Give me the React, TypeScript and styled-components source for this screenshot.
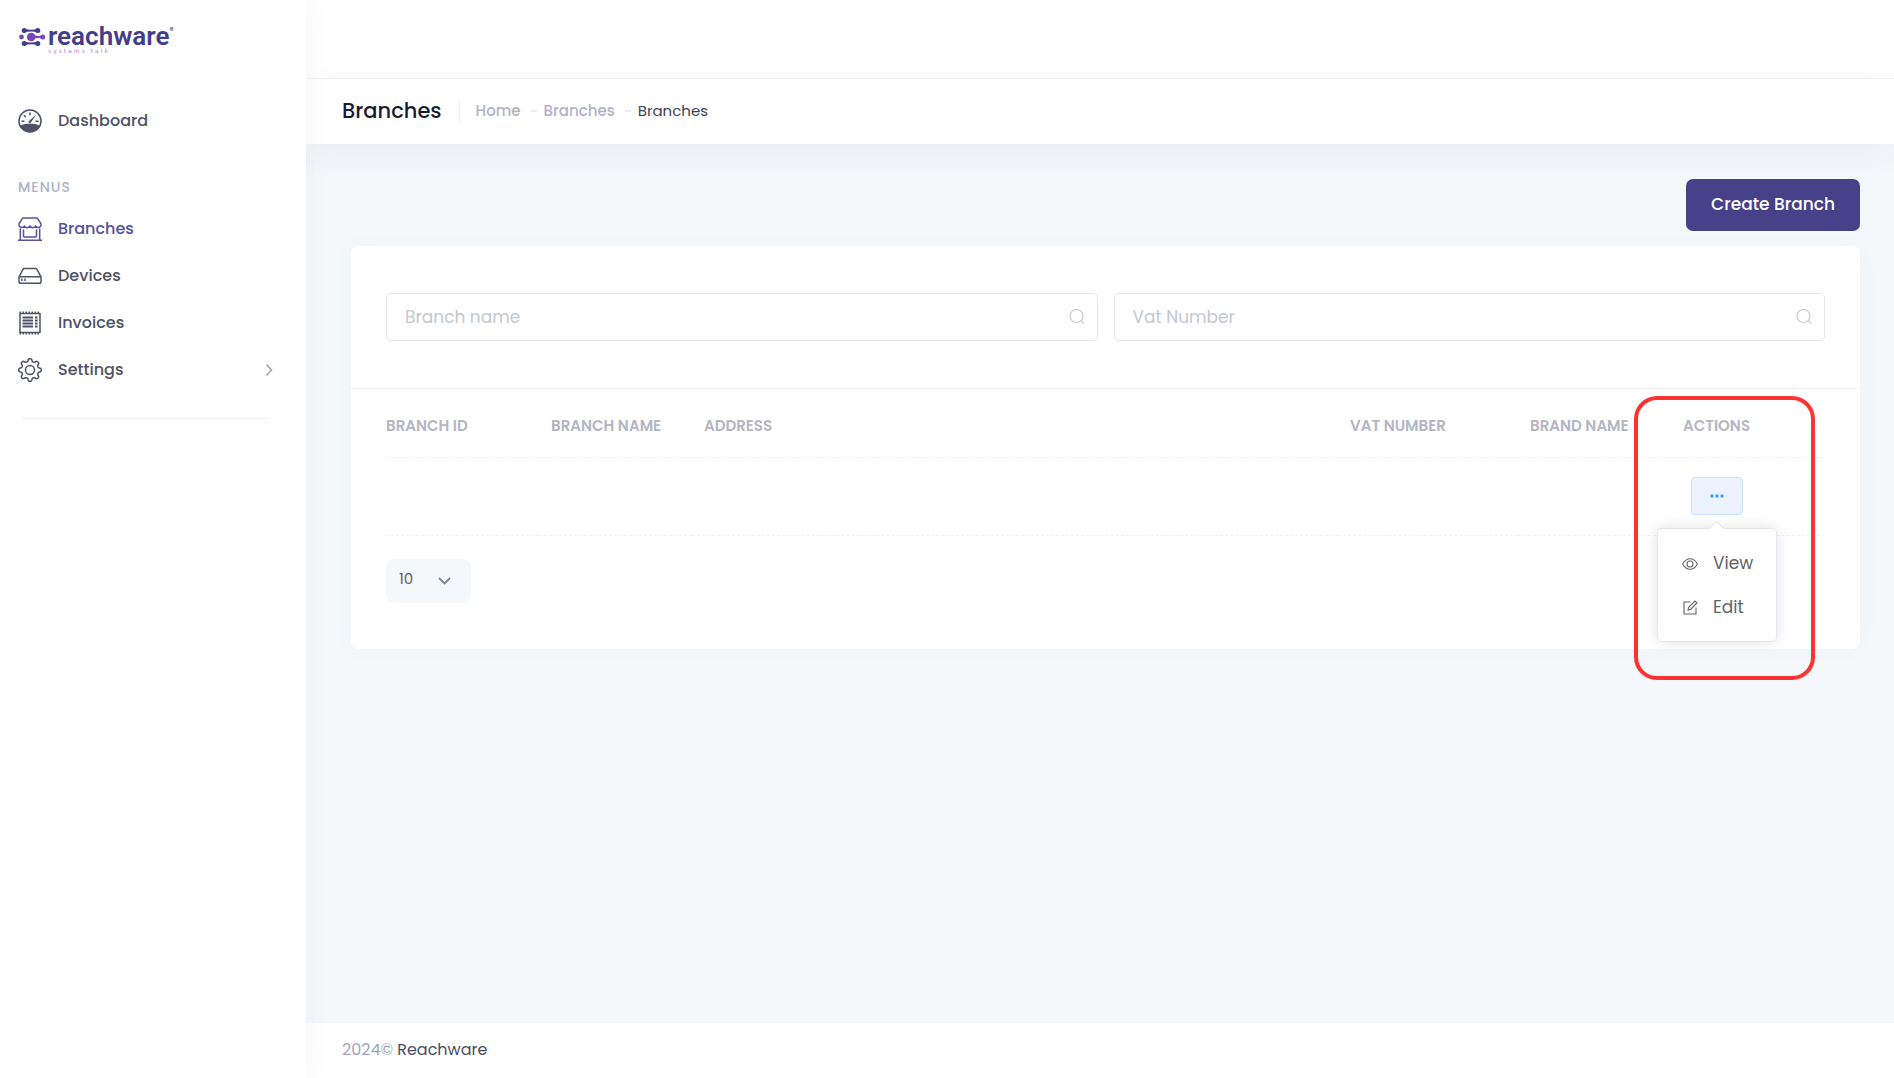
import React, { useState } from 'react';
import styled, { createGlobalStyle, css } from 'styled-components';

const font = "Poppins, Inter, 'Open Sans', sans-serif";

const Global = createGlobalStyle`
  *, *::before, *::after { box-sizing: border-box; }
  body { margin: 0; background: #f4f8fb; font-family: ${font}; font-size: 16px; color: #3f4254; }
  button, input, select { font-family: inherit; }
  a { text-decoration: none; }
`;

const Shell = styled.div`display: flex; min-height: 100vh;`;

const Sidebar = styled.aside`
  flex: 0 0 306px;
  background: #fff;
  box-shadow: 0 0 28px rgba(82, 63, 105, 0.06);
  position: relative;
  z-index: 1;
`;

const Logo = styled.a`
  display: flex;
  align-items: flex-start;
  height: 78px;
  padding: 24px 18px 0;
  color: #433d8b;
`;

const LogoMark = styled.svg`width: 28px; height: 26px; flex: none;`;

const LogoWords = styled.span`display: flex; flex-direction: column; padding-left: 2px;`;

const LogoName = styled.span`
  display: flex;
  font: 600 26px/24px Roboto, sans-serif;
`;

const LogoSign = styled.span`font: 700 6px/12px Inter, sans-serif;`;

const LogoTag = styled.span`
  font: 500 6px/6px 'DejaVu Sans', sans-serif;
  letter-spacing: 2px;
  color: #a98bd0;
`;

const Nav = styled.nav`display: flex; flex-direction: column; padding: 19px 33px 0 18px;`;

const NavLink = styled.a<{ $active?: boolean }>`
  display: flex;
  align-items: center;
  gap: 16px;
  height: 47px;
  font-size: 16px;
  font-weight: 500;
  color: ${(p) => (p.$active ? '#5550a0' : '#4f5266')};
`;

const NavText = styled.span`flex: 1;`;

const NavIcon = styled.svg`
  width: 24px;
  height: 24px;
  fill: none;
  stroke: currentColor;
  stroke-width: 1.5;
`;

const Chevron = styled.svg`
  width: 8px;
  height: 14px;
  fill: none;
  stroke: #a1a5b7;
  stroke-width: 1.6;
`;

const NavHeading = styled.h2`
  margin: 31px 0 6px;
  font-size: 14px;
  line-height: 24px;
  font-weight: 500;
  letter-spacing: 1px;
  color: #b0b3c6;
`;

const NavRule = styled.hr`
  align-self: stretch;
  margin: 25px 4px 0;
  border: 0;
  border-top: 1px solid #eff2f5;
`;

const Page = styled.div`flex: 1; min-width: 0; display: flex; flex-direction: column;`;

const TopBar = styled.header`height: 79px; background: #fff; border-bottom: 1px solid #eff2f5;`;

const TitleBar = styled.div`
  display: flex;
  align-items: center;
  height: 65px;
  padding: 0 36px 2px;
  background: #fff;
  box-shadow: 0 10px 30px rgba(82, 63, 105, 0.05);
`;

const Title = styled.h1`
  margin: 0;
  padding-right: 17px;
  font-size: 21px;
  line-height: 24px;
  font-weight: 500;
  color: #181c32;
  border-right: 1px solid #eff2f5;
`;

const Crumbs = styled.ol`
  display: flex;
  align-items: center;
  gap: 10px;
  margin: 0;
  padding: 0 0 0 16px;
  list-style: none;
  font-size: 15px;
  line-height: 24px;
`;

const Crumb = styled.li<{ $current?: boolean }>`
  display: flex;
  align-items: center;
  gap: 7px;
  font-weight: ${(p) => (p.$current ? 400 : 500)};
  color: ${(p) => (p.$current ? '#3f4254' : '#b0b3c6')};
  a { color: inherit; }
  &:not(:first-child)::before { content: ''; width: 6px; height: 2px; background: #e9edf2; }
`;

const Main = styled.main`flex: 1; padding: 35px 34px 36px 45px;`;

const Actions = styled.div`display: flex; justify-content: flex-end; margin-bottom: 15px;`;

const CreateButton = styled.button`
  height: 52px;
  padding: 0 25px 2px;
  border: 0;
  border-radius: 7px;
  background: #464189;
  color: #fff;
  font-size: 17px;
  font-weight: 500;
`;

const Card = styled.section`
  position: relative;
  background: #fff;
  border-radius: 8px;
  box-shadow: 0 0 24px rgba(76, 87, 125, 0.03);
`;

const Filters = styled.form`
  display: grid;
  grid-template-columns: 1fr 1fr;
  gap: 16px;
  padding: 47px 35px;
  border-bottom: 1px solid #f1f3f6;
`;

const Field = styled.label`
  display: flex;
  align-items: center;
  height: 48px;
  padding: 0 12px 0 18px;
  border: 1px solid #e4e5ee;
  border-radius: 5px;
  color: #c8cbd3;
`;

const FieldInput = styled.input`
  flex: 1;
  min-width: 0;
  border: 0;
  padding: 0;
  outline: 0;
  background: none;
  font-size: 17px;
  color: #3f4254;
  &::placeholder { color: #c4c8d0; opacity: 1; }
`;

const SearchIcon = styled.svg`width: 16px; height: 16px; fill: none; stroke: currentColor; stroke-width: 1.2;`;

const CardBody = styled.div`padding: 0 35px 46px;`;

const Table = styled.table`width: 100%; border-collapse: collapse; table-layout: fixed;`;

const cell = css`
  padding: 0 0 0 12px;
  text-align: left;
  border-bottom: 1px dashed #eff2f5;
  &:first-child { padding-left: 0; }
`;

const Th = styled.th<{ $width?: number }>`
  ${cell}
  width: ${(p) => (p.$width ? `${p.$width}px` : 'auto')};
  height: 68px;
  padding-top: 6px;
  font-size: 15px;
  font-weight: 600;
  color: #b5b5c3;
  white-space: nowrap;
`;

const Td = styled.td`${cell} height: 78px;`;

const MenuAnchor = styled.div`position: relative; width: 52px; margin-left: 8px;`;

const MoreButton = styled.button`
  display: grid;
  place-items: center;
  width: 52px;
  height: 38px;
  padding: 0;
  border: 1px solid #c6e2ff;
  border-radius: 4px;
  background: #ecf3ff;
  color: #409eff;
`;

const Dots = styled.svg`width: 14px; height: 4px; fill: currentColor;`;

const Menu = styled.div`
  position: absolute;
  top: 51px;
  left: 50%;
  transform: translateX(-50%);
  z-index: 2;
  width: 120px;
  padding: 12px 0;
  background: #fff;
  border: 1px solid #e4e7ed;
  border-radius: 5px;
  box-shadow: 0 0 14px rgba(0, 0, 0, 0.12);
  &::before {
    content: '';
    position: absolute;
    top: -6px;
    left: 53px;
    width: 11px;
    height: 11px;
    background: #fff;
    border: solid #e4e7ed;
    border-width: 1px 0 0 1px;
    transform: rotate(45deg);
  }
`;

const MenuItem = styled.button`
  display: flex;
  align-items: center;
  gap: 15px;
  width: 100%;
  height: 44px;
  padding: 0 0 0 24px;
  border: 0;
  background: none;
  color: #606266;
  font-size: 17px;
`;

const MenuIcon = styled.svg`
  flex: none;
  width: 16px;
  height: 16px;
  fill: none;
  stroke: currentColor;
  stroke-width: 1.1;
`;

const Sizer = styled.label`
  display: inline-flex;
  align-items: center;
  position: relative;
  margin-top: 23px;
  color: #7e8299;
`;

const SizeSelect = styled.select`
  appearance: none;
  width: 85px;
  height: 44px;
  padding: 0 13px 4px;
  border: 0;
  border-radius: 8px;
  background: #f4f8fb;
  font-size: 15px;
  font-weight: 400;
  color: #5e6278;
`;

const SizeArrow = styled.svg`
  position: absolute;
  right: 20px;
  width: 13px;
  height: 8px;
  fill: none;
  stroke: currentColor;
  stroke-width: 1.8;
  pointer-events: none;
`;

const Highlight = styled.div`
  position: absolute;
  top: 150px;
  right: 45px;
  z-index: 3;
  width: 181px;
  height: 284px;
  border: 4px solid #ff3131;
  border-radius: 23px;
  pointer-events: none;
`;

const Footer = styled.footer`
  display: flex;
  align-items: center;
  gap: 4px;
  height: 55px;
  padding: 0 36px 2px;
  background: #fff;
  font-size: 16px;
  color: #a1a5b7;
  a { color: #4b4e60; }
`;

function GaugeIcon() {
  return (
    <NavIcon viewBox="0 0 24 24" aria-hidden="true">
      <circle cx="12" cy="12" r="11" />
      <path d="M2 16.800C5 15 9 14.800 12 14.800s7 .2 10 2C20 21 16 23 12 23s-8-2-10-6.200z" fill="currentColor" stroke="none" />
      <path d="M3.500 12.200h3M17.500 12.200h3M12 3.500v2.800M5.800 6.300l2 2" />
      <path d="M18.500 5.200 10.700 12.200a1.300 1.300 0 0 0 1.800 1.800z" fill="currentColor" stroke="none" />
    </NavIcon>
  );
}

function StoreIcon() {
  return (
    <NavIcon viewBox="0 0 24 24" aria-hidden="true">
      <path d="M5.500 1h13q.8 0 1.200.6L23 6.800c.6 3.400-3.300 5-5.300 2.400-1.200 2-4.400 2-5.700 0-1.300 2-4.500 2-5.700 0C4.300 11.800.4 10.200 1 6.800l3.300-5.200Q4.700 1 5.500 1z" />
      <path d="M2.300 11.500V23M21.700 11.500V23M0 23.200h24M5.500 12.500v6.500q0 1 1 1h11q1 0 1-1v-6.500" />
    </NavIcon>
  );
}

function DriveIcon() {
  return (
    <NavIcon viewBox="0 0 24 24" aria-hidden="true">
      <path d="M1 13 5 5.400c.3-.5.700-.8 1.300-.8h11.400c.6 0 1 .3 1.300.8L23 13v4.500c0 1-.8 1.800-1.800 1.800H2.800c-1 0-1.800-.8-1.800-1.800z" />
      <path d="M1.200 12.700h21.600M4 14.500v2.600M7 14.500v2.600" />
    </NavIcon>
  );
}

function InvoiceIcon() {
  return (
    <NavIcon viewBox="0 0 24 24" aria-hidden="true">
      <path d="M2 2v20M22 2v20M2 2.500h20M2 21.500h20" />
      <path d="M1.500 1.200h21M1.500 22.800h21" strokeDasharray="1.500 1.500" />
      <path d="M4.500 6.500h10.500M4.500 9.500h10.500M4.500 12.500h10.500M4.500 15.500h10.500M17 6.500h2.500M17 9.500h2.500M17 12.500h2.500M17 15.500h2.500" strokeWidth="1.800" />
    </NavIcon>
  );
}

const gearOutline = Array.from({ length: 128 }, (_, i) => {
  const angle = (i / 128) * Math.PI * 2;
  const radius = 9.9 + 1.4 * Math.tanh(2 * Math.cos(8 * angle));
  return `${(12 + radius * Math.sin(angle)).toFixed(2)},${(12 - radius * Math.cos(angle)).toFixed(2)}`;
}).join(' ');

function GearIcon() {
  return (
    <NavIcon viewBox="0 0 24 24" aria-hidden="true">
      <circle cx="12" cy="12" r="4.500" />
      <polygon points={gearOutline} strokeLinejoin="round" />
    </NavIcon>
  );
}

function Search() {
  return (
    <SearchIcon viewBox="0 0 16 16" aria-hidden="true">
      <circle cx="7.500" cy="7" r="6.500" />
      <path d="m12 11.500 3 3" />
    </SearchIcon>
  );
}

const columns = [
  { label: 'BRANCH ID', width: 153 },
  { label: 'BRANCH NAME', width: 153 },
  { label: 'ADDRESS' },
  { label: 'VAT NUMBER', width: 180 },
  { label: 'BRAND NAME', width: 153 },
  { label: 'ACTIONS', width: 154 },
];

export default function App() {
  const [open, setOpen] = useState(true);
  return (
    <>
      <Global />
      <Shell>
        <Sidebar>
          <Logo href="#">
            <LogoMark viewBox="0 4 28 26" aria-hidden="true">
              <g fill="#433d8b">
                <circle cx="6.200" cy="10.500" r="2.500" /><circle cx="19.800" cy="10.500" r="2.500" />
                <circle cx="6.200" cy="23.500" r="2.500" /><circle cx="19.800" cy="23.500" r="2.500" />
                <path d="M6 8.500q3 1.300 7 1.300t7-1.300v4q-3-1-7-1t-7 1zM6 25.500q3-1.300 7-1.300t7 1.300v-4q-3 1-7 1t-7-1z" />
              </g>
              <g fill="#7b46b0">
                <circle cx="3.500" cy="17" r="2.400" /><circle cx="13.200" cy="17" r="4.300" /><circle cx="24.700" cy="17" r="2.500" />
                <path d="M15 14.500q4 2.300 9.700 1v3q-5.700-1.300-9.700 1z" />
              </g>
            </LogoMark>
            <LogoWords>
              <LogoName>reachware<LogoSign>®</LogoSign></LogoName>
              <LogoTag>systems talk</LogoTag>
            </LogoWords>
          </Logo>
          <Nav>
            <NavLink href="#"><GaugeIcon /><NavText>Dashboard</NavText></NavLink>
            <NavHeading>MENUS</NavHeading>
            <NavLink href="#" $active><StoreIcon /><NavText>Branches</NavText></NavLink>
            <NavLink href="#"><DriveIcon /><NavText>Devices</NavText></NavLink>
            <NavLink href="#"><InvoiceIcon /><NavText>Invoices</NavText></NavLink>
            <NavLink href="#">
              <GearIcon /><NavText>Settings</NavText>
              <Chevron viewBox="0 0 8 14" aria-hidden="true"><path d="m1.500 1.500 5 5.500-5 5.500" /></Chevron>
            </NavLink>
            <NavRule />
          </Nav>
        </Sidebar>
        <Page>
          <TopBar />
          <TitleBar>
            <Title>Branches</Title>
            <Crumbs>
              <Crumb><a href="#">Home</a></Crumb>
              <Crumb><a href="#">Branches</a></Crumb>
              <Crumb $current>Branches</Crumb>
            </Crumbs>
          </TitleBar>
          <Main>
            <Actions><CreateButton type="button">Create Branch</CreateButton></Actions>
            <Card>
              <Filters>
                <Field><FieldInput aria-label="Branch name" placeholder="Branch name" /><Search /></Field>
                <Field><FieldInput aria-label="Vat Number" placeholder="Vat Number" /><Search /></Field>
              </Filters>
              <CardBody>
                <Table>
                  <thead>
                    <tr>{columns.map((c) => <Th key={c.label} $width={c.width}>{c.label}</Th>)}</tr>
                  </thead>
                  <tbody>
                    <tr>
                      <Td /><Td /><Td /><Td /><Td />
                      <Td>
                        <MenuAnchor>
                          <MoreButton type="button" aria-label="Row actions" onClick={() => setOpen(!open)}>
                            <Dots viewBox="0 0 14 4"><circle cx="2" cy="2" r="1.700" /><circle cx="7" cy="2" r="1.700" /><circle cx="12" cy="2" r="1.700" /></Dots>
                          </MoreButton>
                          {open && (
                            <Menu>
                              <MenuItem type="button">
                                <MenuIcon viewBox="0 0 16 16"><path d="M.6 9C4.500 2 11.500 2 15.400 9 11.500 16 4.500 16 .6 9z" /><circle cx="8" cy="9" r="3" /></MenuIcon>
                                View
                              </MenuItem>
                              <MenuItem type="button">
                                <MenuIcon viewBox="0 0 16 16"><path d="M8.500 3H2v12h12V8.500" /><path d="m6 11 .6-2.600 6.400-6.400 1.900 1.900L8.500 10.400z" /></MenuIcon>
                                Edit
                              </MenuItem>
                            </Menu>
                          )}
                        </MenuAnchor>
                      </Td>
                    </tr>
                  </tbody>
                </Table>
                <Sizer>
                  <SizeSelect aria-label="Rows per page" defaultValue="10">
                    <option>10</option><option>25</option><option>50</option>
                  </SizeSelect>
                  <SizeArrow viewBox="0 0 13 8" aria-hidden="true"><path d="m1 1 5.500 5.500L12 1" /></SizeArrow>
                </Sizer>
              </CardBody>
              <Highlight />
            </Card>
          </Main>
          <Footer><span>2024©</span><a href="#">Reachware</a></Footer>
        </Page>
      </Shell>
    </>
  );
}
